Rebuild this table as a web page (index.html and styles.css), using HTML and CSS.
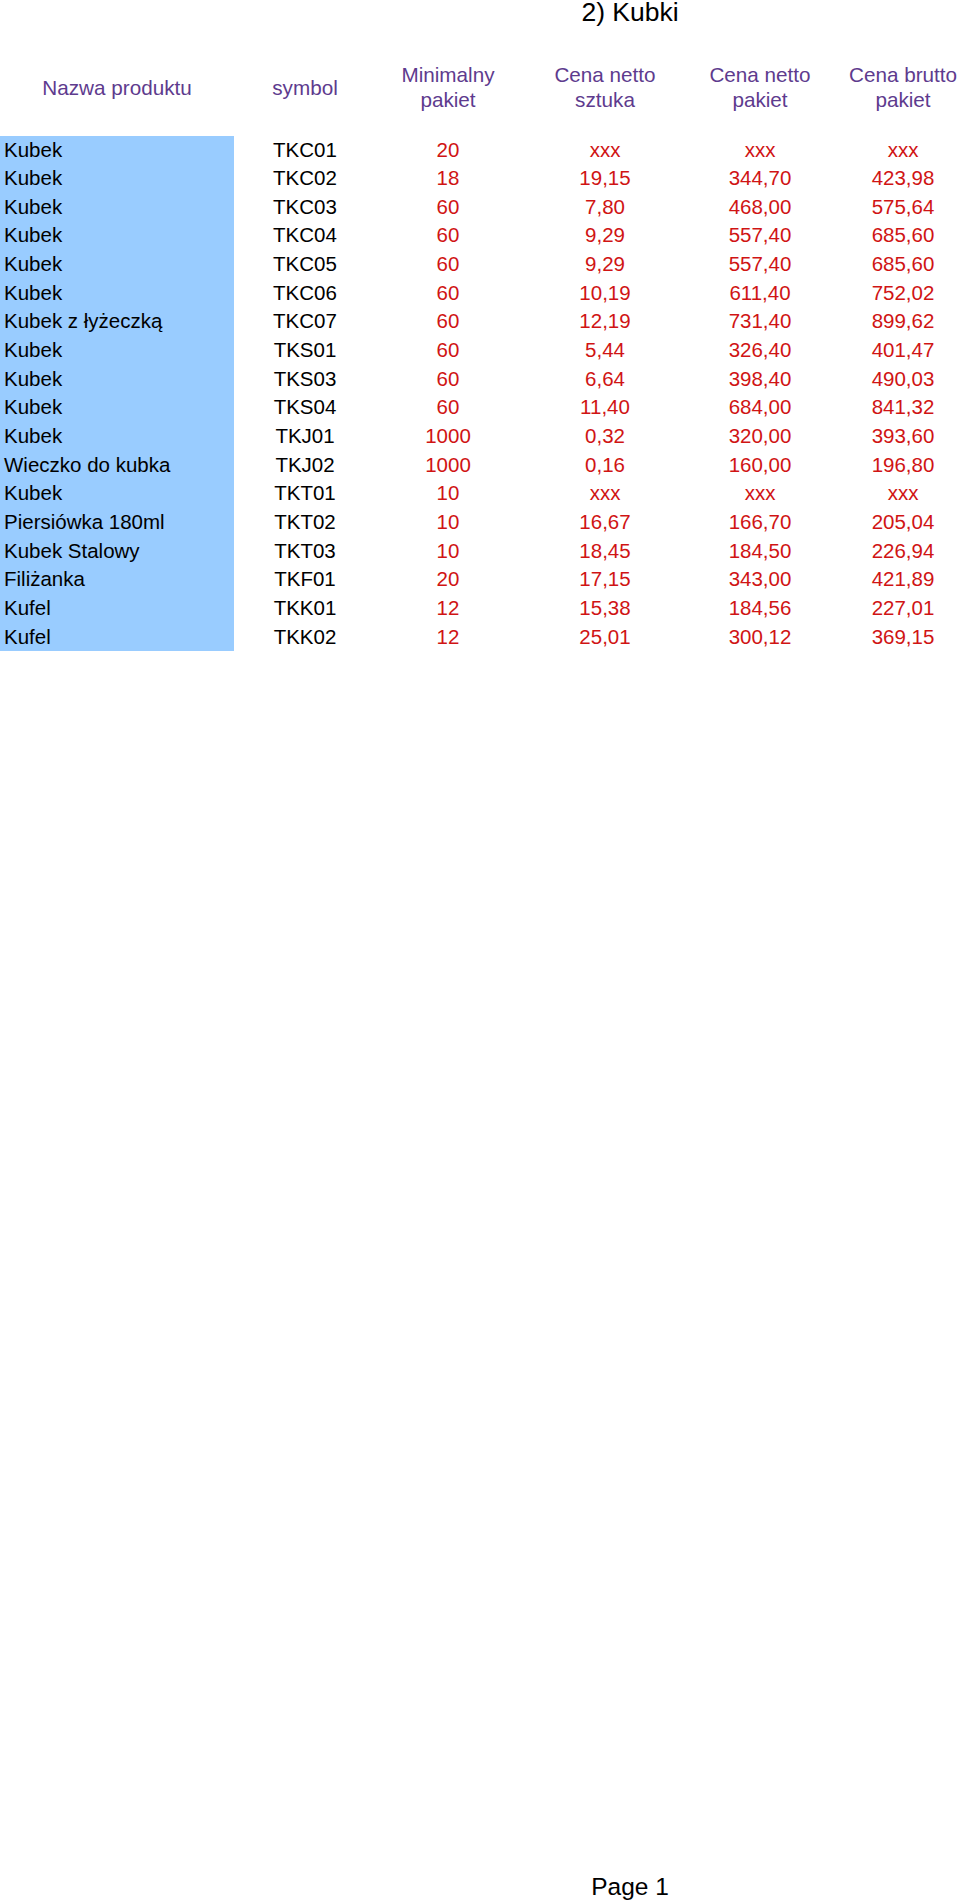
FILE: index.html
```html
<!DOCTYPE html>
<html lang="pl">
<head>
<meta charset="utf-8">
<title>2) Kubki</title>
<link rel="stylesheet" href="styles.css">
</head>
<body>
<div class="page">
  <h1 class="title">2) Kubki</h1>
  <div class="sheet">
    <div class="row head">
      <div class="c c1">Nazwa produktu</div>
      <div class="c c2">symbol</div>
      <div class="c c3">Minimalny<br>pakiet</div>
      <div class="c c4">Cena netto<br>sztuka</div>
      <div class="c c5">Cena netto<br>pakiet</div>
      <div class="c c6">Cena brutto<br>pakiet</div>
    </div>
    <div class="body">
      <div class="row"><div class="c c1 name">Kubek</div><div class="c c2">TKC01</div><div class="c c3">20</div><div class="c c4">xxx</div><div class="c c5">xxx</div><div class="c c6">xxx</div></div>
      <div class="row"><div class="c c1 name">Kubek</div><div class="c c2">TKC02</div><div class="c c3">18</div><div class="c c4">19,15</div><div class="c c5">344,70</div><div class="c c6">423,98</div></div>
      <div class="row"><div class="c c1 name">Kubek</div><div class="c c2">TKC03</div><div class="c c3">60</div><div class="c c4">7,80</div><div class="c c5">468,00</div><div class="c c6">575,64</div></div>
      <div class="row"><div class="c c1 name">Kubek</div><div class="c c2">TKC04</div><div class="c c3">60</div><div class="c c4">9,29</div><div class="c c5">557,40</div><div class="c c6">685,60</div></div>
      <div class="row"><div class="c c1 name">Kubek</div><div class="c c2">TKC05</div><div class="c c3">60</div><div class="c c4">9,29</div><div class="c c5">557,40</div><div class="c c6">685,60</div></div>
      <div class="row"><div class="c c1 name">Kubek</div><div class="c c2">TKC06</div><div class="c c3">60</div><div class="c c4">10,19</div><div class="c c5">611,40</div><div class="c c6">752,02</div></div>
      <div class="row"><div class="c c1 name">Kubek z łyżeczką</div><div class="c c2">TKC07</div><div class="c c3">60</div><div class="c c4">12,19</div><div class="c c5">731,40</div><div class="c c6">899,62</div></div>
      <div class="row"><div class="c c1 name">Kubek</div><div class="c c2">TKS01</div><div class="c c3">60</div><div class="c c4">5,44</div><div class="c c5">326,40</div><div class="c c6">401,47</div></div>
      <div class="row"><div class="c c1 name">Kubek</div><div class="c c2">TKS03</div><div class="c c3">60</div><div class="c c4">6,64</div><div class="c c5">398,40</div><div class="c c6">490,03</div></div>
      <div class="row"><div class="c c1 name">Kubek</div><div class="c c2">TKS04</div><div class="c c3">60</div><div class="c c4">11,40</div><div class="c c5">684,00</div><div class="c c6">841,32</div></div>
      <div class="row"><div class="c c1 name">Kubek</div><div class="c c2">TKJ01</div><div class="c c3">1000</div><div class="c c4">0,32</div><div class="c c5">320,00</div><div class="c c6">393,60</div></div>
      <div class="row"><div class="c c1 name">Wieczko do kubka</div><div class="c c2">TKJ02</div><div class="c c3">1000</div><div class="c c4">0,16</div><div class="c c5">160,00</div><div class="c c6">196,80</div></div>
      <div class="row"><div class="c c1 name">Kubek</div><div class="c c2">TKT01</div><div class="c c3">10</div><div class="c c4">xxx</div><div class="c c5">xxx</div><div class="c c6">xxx</div></div>
      <div class="row"><div class="c c1 name">Piersiówka 180ml</div><div class="c c2">TKT02</div><div class="c c3">10</div><div class="c c4">16,67</div><div class="c c5">166,70</div><div class="c c6">205,04</div></div>
      <div class="row"><div class="c c1 name">Kubek Stalowy</div><div class="c c2">TKT03</div><div class="c c3">10</div><div class="c c4">18,45</div><div class="c c5">184,50</div><div class="c c6">226,94</div></div>
      <div class="row"><div class="c c1 name">Filiżanka</div><div class="c c2">TKF01</div><div class="c c3">20</div><div class="c c4">17,15</div><div class="c c5">343,00</div><div class="c c6">421,89</div></div>
      <div class="row"><div class="c c1 name">Kufel</div><div class="c c2">TKK01</div><div class="c c3">12</div><div class="c c4">15,38</div><div class="c c5">184,56</div><div class="c c6">227,01</div></div>
      <div class="row"><div class="c c1 name">Kufel</div><div class="c c2">TKK02</div><div class="c c3">12</div><div class="c c4">25,01</div><div class="c c5">300,12</div><div class="c c6">369,15</div></div>
    </div>
  </div>
  <div class="footer">Page 1</div>
</div>
</body>
</html>
```
FILE: styles.css
```css
html, body {
  margin: 0;
  padding: 0;
  background: #ffffff;
}
body {
  font-family: "Liberation Sans", Arial, sans-serif;
  color: #000000;
}
.page {
  width: 960px;
  min-height: 1902px;
  display: flex;
  flex-direction: column;
  box-sizing: border-box;
}
.title {
  margin: 0;
  padding-left: 300px;
  font-size: 26.5px;
  font-weight: normal;
  line-height: 25px;
  text-align: center;
  color: #000000;
}
.sheet {
  margin-top: 37px;
  display: flex;
  flex-direction: column;
}
.row {
  display: grid;
  grid-template-columns: 234px 142px 144px 170px 156px 114px;
  height: 28.67px;
  align-items: center;
  font-size: 20.5px;
  line-height: 28.67px;
}
.row.head {
  height: auto;
  line-height: 25px;
  font-size: 20.7px;
  color: #5e3b8e;
  margin-bottom: 23.5px;
}
.c {
  text-align: center;
  white-space: nowrap;
}
.c5 {
  padding-right: 16px;
}
.body .c3, .body .c4, .body .c5, .body .c6 {
  color: #d01414;
}
.body .c2 {
  color: #000000;
}
.name {
  background: #99ccff;
  text-align: left;
  padding-left: 4px;
  height: 100%;
}
.footer {
  margin-top: auto;
  padding-left: 300px;
  padding-bottom: 1px;
  text-align: center;
  font-size: 24.5px;
  line-height: 28px;
  color: #000000;
}
```
